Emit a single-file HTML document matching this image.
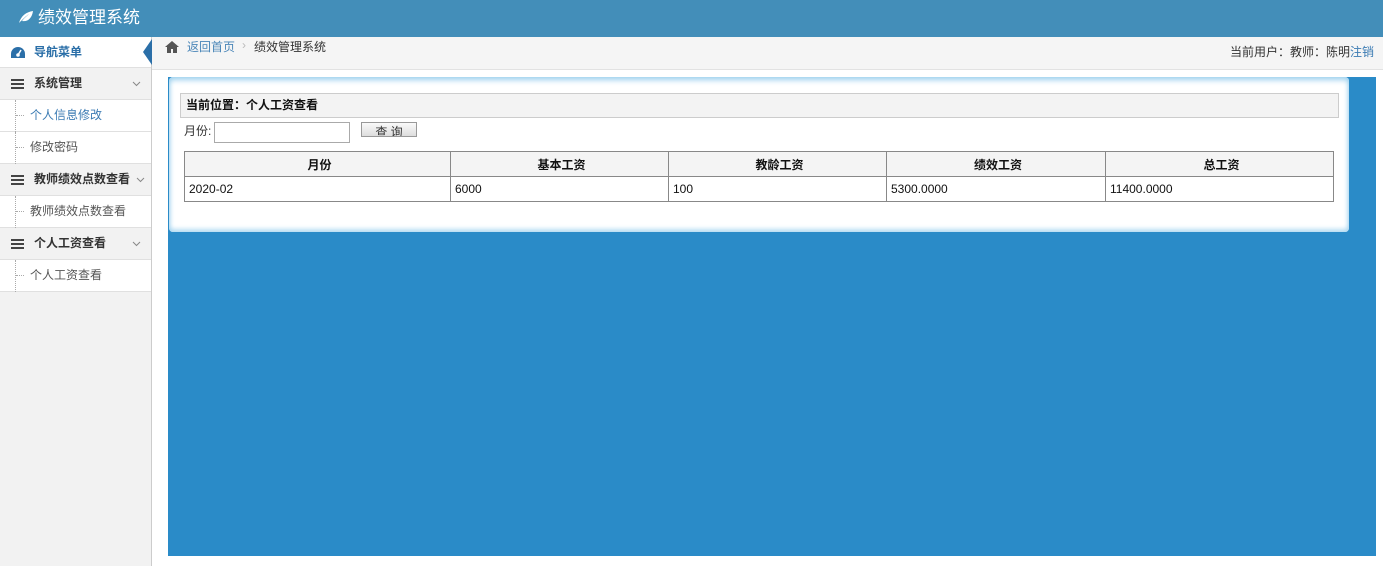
<!DOCTYPE html>
<html><head><meta charset="utf-8"><style>
*{margin:0;padding:0;box-sizing:border-box}
body{width:1383px;height:566px;overflow:hidden;background:#fff;font-family:"Liberation Sans","Noto Sans CJK SC",sans-serif;font-size:12px;color:#333;position:relative}
.hd{position:absolute;left:0;top:0;width:1383px;height:37px;background:#438eb9;color:#fff;font-size:17px;line-height:36px;padding-left:18px}
.sb{position:absolute;left:0;top:37px;width:152px;height:529px;background:#f2f2f2;border-right:1px solid #ccc}
.row{position:absolute;left:0;width:151px;height:32px;line-height:31px;border-bottom:1px solid #e0e0e0;font-size:12px}
.grp{background:#f2f2f2;font-weight:bold;padding-left:34px;color:#333}
.sub{background:#fff;padding-left:30px;color:#555}
.sub:before{content:"";position:absolute;left:15px;top:0;height:32px;border-left:1px dotted #aaa}
.sub:after{content:"";position:absolute;left:16px;top:15px;width:8px;border-top:1px dotted #aaa}
.ic{position:absolute;left:11px;top:11px;width:13px;height:10px;background:repeating-linear-gradient(#444 0 2px,transparent 2px 4px)}
.chev{position:absolute;right:10px;top:13px}
.bc{position:absolute;left:152px;top:37px;width:1231px;height:33px;background:#f5f5f5;border-bottom:1px solid #e2e2e2;font-size:12px}
.blue{position:absolute;left:168px;top:77px;width:1208px;height:479px;background:#2a8bc8}
.panel{position:absolute;left:169px;top:77px;width:1180px;height:155px;background:#fff;border-radius:4px;box-shadow:inset 0 3px 6px #9cd0ee,inset 0 -3px 5px #b9def3}
table{position:absolute;left:184px;top:151px;width:1150px;border-collapse:collapse;font-size:12px}
td,th{border:1px solid #888;height:25px;padding-left:4px}
th{background:#f4f4f4;text-align:center;font-weight:bold;color:#111}
td{color:#111}
</style></head><body>
<div class="hd"><svg width="16" height="14" viewBox="0 0 16 14" style="vertical-align:-1px;margin-right:4px"><path d="M1 13C3 6 8 2 15 1 14 8 10 12 4 11 6 8 9 6 11 4 8 6 5 9 1 13z" fill="#fff"/></svg>绩效管理系统</div>
<div class="sb">
 <div class="row" style="top:0;background:#fff;height:31px;padding-left:34px;color:#2b6fa8;font-weight:bold">
  <svg width="16" height="13" viewBox="0 0 16 13" style="position:absolute;left:10px;top:9px"><path d="M8 1A7 7 0 0 0 1 8v4h14V8A7 7 0 0 0 8 1z" fill="#2b6fa8"/><circle cx="8" cy="9" r="1.8" fill="#fff"/><path d="M8 9L11 4" stroke="#fff" stroke-width="1.5"/></svg>导航菜单
  <div style="position:absolute;right:-1px;top:2px;width:0;height:0;border-top:13px solid transparent;border-bottom:13px solid transparent;border-right:9px solid #2b6fa8"></div>
 </div>
 <div class="row grp" style="top:31px"><span class="ic"></span>系统管理<svg class="chev" width="9" height="6" viewBox="0 0 9 6"><path d="M1 1l3.5 3.5L8 1" stroke="#888" fill="none"/></svg></div>
 <div class="row sub" style="top:63px;color:#3b7bb3">个人信息修改</div>
 <div class="row sub" style="top:95px">修改密码</div>
 <div class="row grp" style="top:127px"><span class="ic"></span>教师绩效点数查看<svg class="chev" style="right:6px" width="9" height="6" viewBox="0 0 9 6"><path d="M1 1l3.5 3.5L8 1" stroke="#888" fill="none"/></svg></div>
 <div class="row sub" style="top:159px">教师绩效点数查看</div>
 <div class="row grp" style="top:191px"><span class="ic"></span>个人工资查看<svg class="chev" width="9" height="6" viewBox="0 0 9 6"><path d="M1 1l3.5 3.5L8 1" stroke="#888" fill="none"/></svg></div>
 <div class="row sub" style="top:223px">个人工资查看</div>
</div>
<div class="bc">
 <svg width="14" height="12" viewBox="0 0 14 12" style="position:absolute;left:13px;top:4px"><path d="M7 0L0 6h2v6h4V8h2v4h4V6h2z" fill="#555"/></svg>
 <span style="position:absolute;left:35px;top:1px;color:#4a86b8">返回首页</span>
 <span style="position:absolute;left:90px;top:1px;color:#bbb">›</span>
 <span style="position:absolute;left:102px;top:1px">绩效管理系统</span>
 <span style="position:absolute;right:9px;top:6px">当前用户：教师：陈明<span style="color:#3b7bb3">注销</span></span>
</div>
<div class="blue"></div>
<div class="panel">
 <div style="position:absolute;left:11px;top:16px;width:1159px;height:25px;background:#f3f3f3;border:1px solid #ccc;font-weight:bold;line-height:23px;padding-left:5px;color:#111">当前位置：个人工资查看</div>
 <div style="position:absolute;left:15px;top:46px;line-height:17px">月份:</div>
 <div style="position:absolute;left:45px;top:45px;width:136px;height:21px;border:1px solid #aaa"></div>
 <div style="position:absolute;left:192px;top:45px;width:56px;height:15px;border:1px solid #999;background:linear-gradient(#fafafa,#ddd);text-align:center;font-size:12px;line-height:18px;overflow:hidden">查 询</div>
</div>
<table>
<tr><th style="width:266px">月份</th><th style="width:218px">基本工资</th><th style="width:218px">教龄工资</th><th style="width:219px">绩效工资</th><th>总工资</th></tr>
<tr><td>2020-02</td><td>6000</td><td>100</td><td>5300.0000</td><td>11400.0000</td></tr>
</table>
</body></html>
